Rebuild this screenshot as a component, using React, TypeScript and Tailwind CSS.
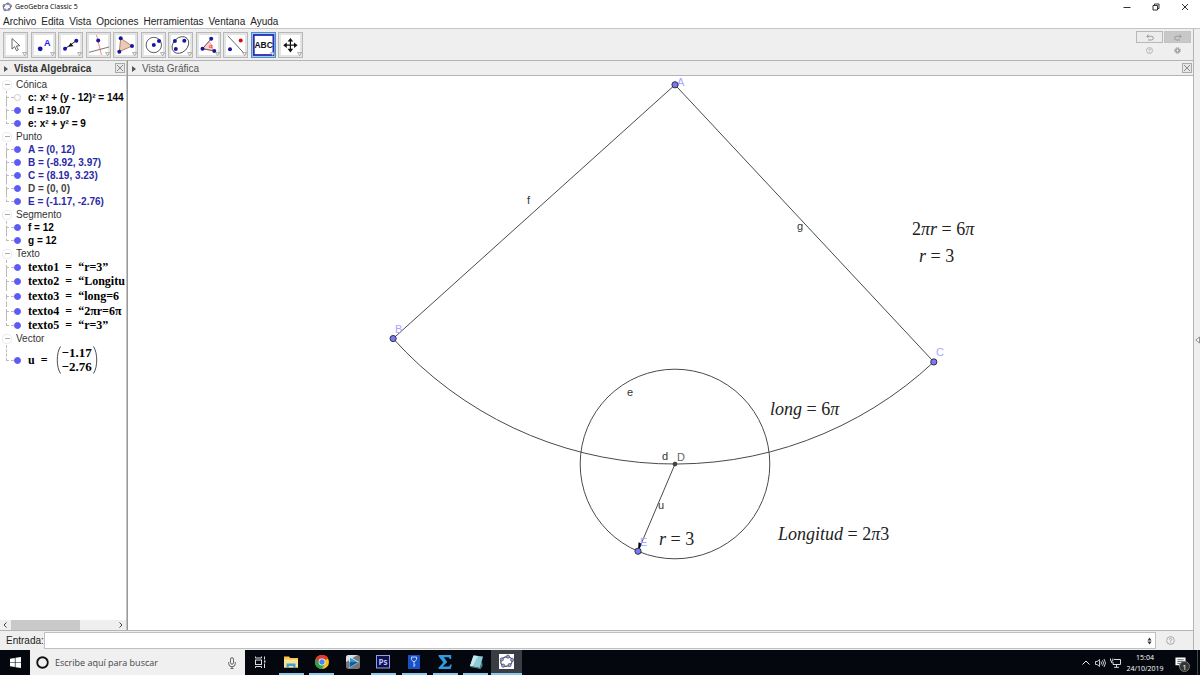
import { ReactNode } from "react";
import { clsx } from "clsx";

const MENUS = ["Archivo", "Edita", "Vista", "Opciones", "Herramientas", "Ventana", "Ayuda"];

const BLUE = "#1616a0";

const Dot = ({ x, y, fill = BLUE, r = 2 }: { x: number; y: number; fill?: string; r?: number }) => (
  <circle cx={x} cy={y} r={r} fill={fill} />
);

type Tool = { name: string; icon: ReactNode; selected?: boolean };
const TOOLS: Tool[] = [
  {
    name: "Elige y mueve",
    icon: (
      <path
        d="M9 6.5v10.6l2.6-2.4 1.9 4 1.8-.9-1.9-3.8 3.4-.3z"
        fill="#fff"
        stroke="#555"
        strokeWidth=".9"
      />
    ),
  },
  {
    name: "Punto",
    icon: (
      <>
        <Dot x={9.2} y={16.8} r={2.4} />
        <text x="13" y="13.5" fontSize="9" fontWeight="bold" fill="#1a1aff">
          A
        </text>
      </>
    ),
  },
  {
    name: "Recta",
    icon: (
      <>
        <path d="M7 16.7 18.3 8.7" stroke="#222" />
        <path d="m10.5 14.8 2-4 3 3.4z" fill="#111" />
        <Dot x={7} y={16.7} />
        <Dot x={18.3} y={8.7} />
      </>
    ),
  },
  {
    name: "Perpendicular",
    icon: (
      <>
        <path d="m10.5 3 5 20" stroke="#f88" />
        <path d="m3 20.3 20-5.3" stroke="#555" strokeWidth=".8" />
        <Dot x={12.2} y={8.5} />
      </>
    ),
  },
  {
    name: "Polígono",
    icon: (
      <>
        <path d="M7.7 6.3 19 14 6.3 19.7z" fill="#ecc9b6" stroke="#a5684c" strokeWidth=".8" />
        <Dot x={7.7} y={6.3} />
        <Dot x={19} y={14} />
        <Dot x={6.3} y={19.7} />
      </>
    ),
  },
  {
    name: "Circunferencia",
    icon: (
      <>
        <circle cx="12.8" cy="13" r="7.7" fill="none" stroke="#333" strokeWidth=".8" />
        <Dot x={12.8} y={13} />
        <Dot x={18} y={9} />
      </>
    ),
  },
  {
    name: "Elipse",
    icon: (
      <>
        <ellipse
          cx="12.4"
          cy="13"
          rx="9.4"
          ry="7.2"
          transform="rotate(-45 12.4 13)"
          fill="none"
          stroke="#333"
          strokeWidth=".8"
        />
        <Dot x={6.9} y={9} />
        <Dot x={16.3} y={8.8} />
        <Dot x={7.8} y={17} />
      </>
    ),
  },
  {
    name: "Ángulo",
    icon: (
      <>
        <path d="M6.5 16.7 13 9.5a10 10 0 0 1 3.6 9z" fill="#fbd0d0" stroke="#f66" strokeWidth=".6" />
        <path d="m15.2 6.7-8.7 10 12 2.3" fill="none" stroke="#444" strokeWidth=".8" />
        <text x="13" y="16" fontSize="6" fill="#e00">
          α
        </text>
        <Dot x={15.2} y={6.7} />
        <Dot x={6.5} y={16.7} />
        <Dot x={18.3} y={19} />
      </>
    ),
  },
  {
    name: "Simetría axial",
    icon: (
      <>
        <path d="M4.7 3.7 22 22.3" stroke="#444" strokeWidth=".8" />
        <Dot x={7} y={17.3} />
        <Dot x={17.7} y={8.5} fill="#d01010" />
      </>
    ),
  },
  {
    name: "Texto",
    selected: true,
    icon: (
      <text x="12.7" y="16.4" fontSize="8.500" fontWeight="bold" textAnchor="middle" fill="#111">
        ABC
      </text>
    ),
  },
  {
    name: "Desplaza vista gráfica",
    icon: (
      <g fill="#111">
        <path d="M11.8 9h1.2v8.4h-1.2zM8 12.6h8.6v1.2H8z" />
        <path d="m12.4 6 2.8 3.6H9.6zM12.4 20.4l2.8-3.6H9.6zM5.2 13.2l3.6-2.8V16zM19.6 13.2 16 10.4V16z" />
      </g>
    ),
  },
];

const ToolButton = ({ name, icon, selected }: Tool) => (
  <button type="button" aria-label={name} aria-pressed={!!selected}>
    <svg viewBox="0 0 25 26" className="w-[25px] h-[26px]">
      <rect
        x=".5"
        y=".5"
        width="24"
        height="25"
        fill={selected ? "#a9cdee" : "#e4e4e4"}
        stroke={selected ? "#4a90cf" : "#b8b8b8"}
      />
      <rect
        x={selected ? 2.8 : 3}
        y="3"
        width={selected ? 19.6 : 19}
        height="20"
        fill="#fff"
        stroke={selected ? "#2b2bb0" : "#fff"}
        strokeWidth={selected ? 1.8 : 0}
      />
      {icon}
      <path d="M19.6 20.6h4l-2 3z" fill="#fff" stroke="#888" strokeWidth=".7" />
    </svg>
  </button>
);

type Item = { text: ReactNode; hidden?: boolean; color?: string; latex?: boolean; height?: string };
type Group = { name: string; items: Item[] };

const Latex = ({ name, value }: { name: string; value: string }) => (
  <>
    {name}&nbsp; =&nbsp; {value}
  </>
);

const GROUPS: Group[] = [
  {
    name: "Cónica",
    items: [
      { text: "c: x² + (y - 12)² = 144", hidden: true },
      { text: "d = 19.07" },
      { text: "e: x² + y² = 9" },
    ],
  },
  {
    name: "Punto",
    items: [
      { text: "A = (0, 12)", color: "text-[#2a2aa5]" },
      { text: "B = (-8.92, 3.97)", color: "text-[#2a2aa5]" },
      { text: "C = (8.19, 3.23)", color: "text-[#2a2aa5]" },
      { text: "D = (0, 0)", color: "text-[#444]" },
      { text: "E = (-1.17, -2.76)", color: "text-[#2a2aa5]" },
    ],
  },
  { name: "Segmento", items: [{ text: "f = 12" }, { text: "g = 12" }] },
  {
    name: "Texto",
    items: [
      { text: <Latex name="texto1" value="“r=3”" />, latex: true, height: "h-[14px]" },
      { text: <Latex name="texto2" value="“Longitu" />, latex: true, height: "h-[14px]" },
      { text: <Latex name="texto3" value="“long=6" />, latex: true, height: "h-4" },
      { text: <Latex name="texto4" value="“2πr=6π" />, latex: true, height: "h-[14px]" },
      { text: <Latex name="texto5" value="“r=3”" />, latex: true, height: "h-[14px]" },
    ],
  },
  {
    name: "Vector",
    items: [
      {
        latex: true,
        height: "h-[30px]",
        text: (
          <span className="flex items-center gap-2">
            <span>u&nbsp; =</span>
            <span className="flex items-stretch gap-px">
              <svg viewBox="0 0 5 28" className="w-[5px] h-7" fill="none" stroke="#222" strokeWidth=".8">
                <path d="M4.500.5C.2 7 .2 21 4.500 27.500" />
              </svg>
              <span className="flex flex-col justify-center text-right text-[13px] leading-[14px]">
                <span>−1.17</span>
                <span>−2.76</span>
              </span>
              <svg viewBox="0 0 5 28" className="w-[5px] h-7" fill="none" stroke="#222" strokeWidth=".8">
                <path d="M.5.5c4.300 6.500 4.300 20.500 0 27" />
              </svg>
            </span>
          </span>
        ),
      },
    ],
  },
];

const TreeGroup = ({ name, items }: Group) => (
  <li>
    <div className="flex items-center h-[13px] gap-1 pl-[2px] text-[#333]">
      <button
        type="button"
        aria-label={`Contraer ${name}`}
        className="w-[10px] h-[10px] flex items-center justify-center rounded-sm border border-[#ececec]"
      >
        <span className="w-[5px] h-px bg-[#aaa]" />
      </button>
      {name}
    </div>
    <ul>
      {items.map((item, i) => (
        <li key={i} className={clsx("flex items-center pl-[6px]", item.height ?? "h-[13px]")}>
          <span className="flex flex-col self-stretch w-2 shrink-0">
            <span className="flex-1 border-l border-b border-dashed border-[#bbb]" />
            <span
              className={clsx(
                "flex-1 border-l border-dashed",
                i === items.length - 1 ? "border-transparent" : "border-[#bbb]",
              )}
            />
          </span>
          <span
            className={clsx(
              "w-[7px] h-[7px] shrink-0 rounded-full border mr-[7px]",
              item.hidden ? "border-[#ccc] bg-white" : "border-[#5b5bf5] bg-[#5b5bf5]",
            )}
          />
          <span
            className={clsx(
              "font-bold whitespace-nowrap",
              item.color ?? "text-black",
              item.latex && "font-['Liberation_Serif',serif] text-xs leading-3",
            )}
          >
            {item.text}
          </span>
        </li>
      ))}
    </ul>
  </li>
);

const CloseButton = ({ label }: { label: string }) => (
  <button type="button" aria-label={label}>
    <svg viewBox="0 0 10 10" className="w-[10px] h-[10px]" stroke="#888">
      <rect x=".5" y=".5" width="9" height="9" fill="#e8e8e8" stroke="#aaa" />
      <path d="m2 2 6 6m0-6-6 6" />
    </svg>
  </button>
);

const PanelHeader = ({ title, active }: { title: string; active?: boolean }) => (
  <header className="flex items-center justify-between h-4 border-y border-[#b4b4b4] bg-[#efefef] pl-1 pr-px">
    <h2 className={clsx("flex items-center gap-[6px] pt-px", active ? "font-bold text-[#333]" : "text-[#555]")}>
      <svg viewBox="0 0 4 6" className="w-1 h-[6px]" fill="#555">
        <path d="m0 0 4 3-4 3z" />
      </svg>
      {title}
    </h2>
    <CloseButton label={`Cerrar ${title}`} />
  </header>
);

// Graphics view: world coordinates -> canvas pixels
const SCALE = 31.6;
const px = (x: number) => 547 + x * SCALE;
const py = (y: number) => 388 - y * SCALE;

const A = { x: 0, y: 12 };
const B = { x: -8.92, y: 3.97 };
const C = { x: 8.19, y: 3.23 };
const D = { x: 0, y: 0 };
const E = { x: -1.17, y: -2.76 };

const LABELS = [
  { text: "A", x: 549, y: 10, color: "#a6a6ff" },
  { text: "B", x: 267, y: 257, color: "#a6a6ff" },
  { text: "C", x: 808, y: 280, color: "#a6a6ff" },
  { text: "D", x: 549, y: 385, color: "#666" },
  { text: "E", x: 512, y: 470, color: "#a6a6ff" },
  { text: "f", x: 399, y: 128, color: "#333" },
  { text: "g", x: 669, y: 154, color: "#333" },
  { text: "e", x: 499, y: 320, color: "#333" },
  { text: "d", x: 534, y: 384, color: "#333" },
  { text: "u", x: 530, y: 433, color: "#333" },
];

const FORMULAS = [
  { x: 784, y: 159, left: "2πr", right: "6π" },
  { x: 791, y: 186, left: "r", right: "3" },
  { x: 642, y: 339, left: "long", right: "6π" },
  { x: 531, y: 469, left: "r", right: "3" },
  { x: 650, y: 464, left: "Longitud", right: "2π3" },
];

// digits stay upright, variables are set in italics
const mathSpans = (source: string) =>
  source.split(/(\d+)/).map((part, i) => (
    <tspan key={i} fontStyle={/\d/.test(part) ? "normal" : "italic"}>
      {part}
    </tspan>
  ));

const GraphicsView = () => (
  <svg className="w-full flex-1 bg-white" role="img" aria-label="Vista Gráfica">
    <g fill="none" stroke="#4a4a4a">
      <path d={`M${px(B.x)} ${py(B.y)}L${px(A.x)} ${py(A.y)}L${px(C.x)} ${py(C.y)}`} />
      <path
        d={`M${px(B.x)} ${py(B.y)}A${12 * SCALE} ${12 * SCALE} 0 0 0 ${px(C.x)} ${py(C.y)}`}
      />
      <circle cx={px(D.x)} cy={py(D.y)} r={3 * SCALE} />
      <path d={`M${px(D.x)} ${py(D.y)}L${px(E.x)} ${py(E.y)}`} />
    </g>
    <path d={`M${px(E.x)} ${py(E.y)}l.5-9 3.500 1.500z`} fill="#000" />
    <g fontSize="11">
      {LABELS.map((l) => (
        <text key={l.text} x={l.x} y={l.y} fill={l.color}>
          {l.text}
        </text>
      ))}
    </g>
    <circle cx={px(D.x)} cy={py(D.y)} r="2" fill="#444" stroke="#222" strokeWidth=".6" />
    {[A, B, C, E].map((p) => (
      <circle key={p.x} cx={px(p.x)} cy={py(p.y)} r="3.100" fill="#7878ff" stroke="#333" />
    ))}
    <g className="font-['Liberation_Serif',serif] text-lg" fill="#222">
      {FORMULAS.map((f) => (
        <text key={`${f.x}-${f.y}`} x={f.x} y={f.y}>
          {mathSpans(f.left)} = {mathSpans(f.right)}
        </text>
      ))}
    </g>
  </svg>
);

const GeoGebraLogo = ({ className }: { className: string }) => (
  <svg viewBox="0 0 16 16" className={className}>
    <ellipse cx="8" cy="8" rx="6.200" ry="5" transform="rotate(-20 8 8)" fill="none" stroke="#555" strokeWidth="1.300" />
    <g fill="#9a9aff" stroke="#444" strokeWidth=".7">
      <circle cx="9.500" cy="2.800" r="1.700" />
      <circle cx="3" cy="5.800" r="1.700" />
      <circle cx="4.500" cy="12.400" r="1.700" />
      <circle cx="11.300" cy="11.800" r="1.700" />
      <circle cx="14" cy="6.200" r="1.700" />
    </g>
  </svg>
);

type Task = { name: string; icon: ReactNode; open?: boolean; active?: boolean };
const TASKS: Task[] = [
  {
    name: "Vista de tareas",
    icon: (
      <g fill="none" stroke="#ddd">
        <rect x="3.500" y="6" width="6" height="4.500" />
        <path d="M3.500 2.500v1.500h6V2.500M3.500 14v-1.500h6V14M12.500 2.500v3M12.500 9.500V14" />
        <path d="M12 7.500h1.500" strokeWidth="1.800" />
      </g>
    ),
  },
  {
    name: "Explorador de archivos",
    open: true,
    icon: (
      <>
        <path d="M1 2.500h5l1.300 1.500H15v9.500H1z" fill="#f3c74f" />
        <path d="M1 5.500h14v8H1z" fill="#fbe394" />
        <path d="M3.500 14V9.500h9V14h-2.300v-2H5.800v2z" fill="#3ba0e0" />
      </>
    ),
  },
  {
    name: "Chrome",
    open: true,
    icon: (
      <>
        <circle cx="8" cy="8" r="7" fill="#fbc116" />
        <path d="M8 8 1.900 4.500A7 7 0 0 1 14.100 4.500z" fill="#e33b2e" />
        <path d="M8 8 1.900 4.500A7 7 0 0 0 8 15l3-5.200z" fill="#2ba24c" />
        <path d="M8 4.800h6.300A7 7 0 0 0 1.900 4.500L5.200 9.600z" fill="#e33b2e" />
        <circle cx="8" cy="8" r="3.400" fill="#fff" />
        <circle cx="8" cy="8" r="2.700" fill="#4285f4" />
      </>
    ),
  },
  {
    name: "Reproductor",
    icon: (
      <>
        <rect x="1" y="1" width="14" height="14" rx="2.500" fill="#777" />
        <path d="M1 8V3.500A2.500 2.500 0 0 1 3.500 1h9z" fill="#ddd" />
        <path d="M4.500 3v10.500L13.500 8z" fill="#2c9bd6" stroke="#e8f6ff" strokeWidth=".8" />
        <path d="M4.500 8v5.500L13.500 8z" fill="#105f9a" />
      </>
    ),
  },
  {
    name: "Photoshop",
    open: true,
    icon: (
      <>
        <rect x="1.500" y="1.500" width="13" height="12.500" fill="#10104c" stroke="#8fa0e8" />
        <text x="8" y="11" fontSize="8" fontWeight="bold" textAnchor="middle" fill="#b9c8ff">
          Ps
        </text>
      </>
    ),
  },
  {
    name: "Llave",
    open: true,
    icon: (
      <>
        <rect x="2" y="1" width="12" height="14" fill="#1a50c4" />
        <path d="M5.500 3h5v2.500L9 7.500H7L5.500 5.500zM8 7.500V13M8 11h1.500" fill="none" stroke="#b8d4ff" />
      </>
    ),
  },
  {
    name: "Editor de ecuaciones",
    open: true,
    icon: (
      <path
        d="M1.500 1h12.700v4h-1.500c-.3-1.300-1-1.700-2.200-1.700H6.800L10.300 8l-4.500 4.500h5c1.500 0 2-.6 2.500-2h1.500L13.700 15H1.500v-1.200L6.300 8.500 1.500 2.200z"
        fill="#2f9ae0"
      />
    ),
  },
  {
    name: "Bloc de notas",
    open: true,
    icon: (
      <>
        <path d="m5.500 1.500 9.500 1-3 11.500-10-2z" fill="#8ccad4" />
        <path d="m5.500 1.500 4.500.5L4.500 12.500 2 12z" fill="#c8e8ee" />
        <path d="m2 12 10 2 2-8 .500 6-2 3L2.500 13z" fill="#4b8590" />
      </>
    ),
  },
  {
    name: "GeoGebra",
    open: true,
    active: true,
    icon: null,
  },
];

const Taskbar = () => (
  <footer className="flex h-[25px] bg-[#05070f] text-white font-['Open_Sans',sans-serif]">
    <button type="button" aria-label="Inicio" className="w-[30px] flex items-center justify-center">
      <svg viewBox="0 0 12 12" className="w-[11px] h-[11px]" fill="#fff">
        <path d="M0 1.800 5.300 1v4.700H0zM6 .900 12 0v5.700H6zM0 6.300h5.300V11L0 10.200zM6 6.300h6V12l-6-.9z" />
      </svg>
    </button>
    <label className="w-[215px] flex items-center gap-[6px] bg-[#f0f0f0] pl-[6px] pr-2">
      <svg viewBox="0 0 14 14" className="w-[13px] h-[13px]" fill="none" stroke="#111" strokeWidth="2">
        <circle cx="7" cy="7" r="5.700" />
      </svg>
      <input
        type="text"
        aria-label="Buscar"
        placeholder="Escribe aquí para buscar"
        className="flex-1 min-w-0 bg-transparent outline-none text-[9px] placeholder:text-[#444]"
      />
      <svg viewBox="0 0 10 12" className="w-[10px] h-3" fill="none" stroke="#555" strokeWidth=".9">
        <rect x="3.500" y=".7" width="3" height="6.500" rx="1.500" />
        <path d="M1.700 5v1.500a3.300 3.300 0 0 0 6.600 0V5M5 9.800v1.700M3.500 11.500h3" />
      </svg>
    </label>
    <nav className="grid grid-cols-9 w-[277px]">
      {TASKS.map((t) => (
        <button
          key={t.name}
          type="button"
          aria-label={t.name}
          className={clsx("flex flex-col items-center", t.active && "bg-[#3b3d44]")}
        >
          <span className="flex-1 flex items-center">
            {t.icon ? (
              <svg viewBox="0 0 16 16" className="w-4 h-4">
                {t.icon}
              </svg>
            ) : (
              <span className="bg-white">
                <GeoGebraLogo className="w-[15px] h-[15px]" />
              </span>
            )}
          </span>
          <span
            className={clsx("h-[2px]", t.active ? "w-full" : "w-[25px]", t.open ? "bg-[#8cc9ec]" : "bg-transparent")}
          />
        </button>
      ))}
    </nav>
    <div className="ml-auto flex items-center pr-[2px]">
      <button type="button" aria-label="Mostrar iconos ocultos" className="w-[15px] flex justify-center">
        <svg viewBox="0 0 8 5" className="w-2 h-[5px]" fill="none" stroke="#eee">
          <path d="m.5 4.500 3.500-3.500 3.500 3.500" />
        </svg>
      </button>
      <button type="button" aria-label="Volumen" className="w-[15px] flex justify-center">
        <svg viewBox="0 0 11 10" className="w-[11px] h-[10px]" fill="none" stroke="#ddd" strokeWidth=".9">
          <path d="M.5 3.500h1.700L4.500 1.500v7l-2.300-2H.5zM6 3.500q1 1.500 0 3M7.500 2.300q2 2.700 0 5.400M9 1q3 4 0 8" />
        </svg>
      </button>
      <button type="button" aria-label="Red" className="w-[15px] flex justify-center">
        <svg viewBox="0 0 11 10" className="w-[11px] h-[10px]" fill="none" stroke="#ddd">
          <path d="M4 1.500h6.500v5H3V4M6.500 6.500v2.500M4 9.300h5" />
          <path d="M.5.500v1.500a1.200 1.200 0 0 0 2.400 0V.5M1.700 3v2" />
        </svg>
      </button>
      <time className="w-11 text-center text-[7px] leading-[11px]">
        15:04
        <br />
        24/10/2019
      </time>
      <button type="button" aria-label="Notificaciones" className="relative w-[30px] h-[25px] pl-2">
        <svg viewBox="0 0 12 12" className="w-[11px] h-[11px]">
          <path d="M.5.500h11v8.500H7l-2.500 2.500V9h-4z" fill="#fff" />
          <path d="M2.500 3h7M2.500 5h7M2.500 7h5" stroke="#333" strokeWidth=".8" />
        </svg>
        <span className="absolute left-[12px] top-[11px] w-[11px] h-[11px] rounded-full border border-[#777] bg-[#333] text-[8px] leading-[9px]">
          1
        </span>
      </button>
      <span className="w-px self-stretch bg-[#444]" />
    </div>
  </footer>
);

const HelpIcon = ({ className }: { className: string }) => (
  <svg viewBox="0 0 10 10" className={className} fill="none" stroke="#999" strokeWidth=".9">
    <circle cx="5" cy="5" r="4.300" />
    <path d="M3.700 4A1.300 1.300 0 1 1 5 5.300V6M5 7v.9" />
  </svg>
);

export default function App() {
  return (
    <div className="flex flex-col min-h-screen bg-white font-['Liberation_Sans',sans-serif] text-[10px] leading-3 text-[#222]">
      <div className="flex items-center justify-between h-[14px] pl-[2px] pr-[11px]">
        <h1 className="flex items-center gap-[3px] font-['Open_Sans',sans-serif] text-[7px] text-black">
          <GeoGebraLogo className="w-[10px] h-[10px]" />
          GeoGebra Classic 5
        </h1>
        <div className="flex items-center gap-[21px]">
          <button type="button" aria-label="Minimizar">
            <svg viewBox="0 0 8 8" className="w-2 h-2" stroke="#333">
              <path d="M.5 4.500h7" />
            </svg>
          </button>
          <button type="button" aria-label="Restaurar">
            <svg viewBox="0 0 8 8" className="w-2 h-2" stroke="#333" fill="none">
              <path d="M1 2.500h4.500V7H1zM2.500 2.500V1H7v4.500H5.500" />
            </svg>
          </button>
          <button type="button" aria-label="Cerrar">
            <svg viewBox="0 0 8 8" className="w-2 h-2" stroke="#333">
              <path d="m1 1 6 6m0-6L1 7" />
            </svg>
          </button>
        </div>
      </div>

      <nav className="flex items-center h-[14px] gap-[5px] pl-[3px] pt-px">
        {MENUS.map((m) => (
          <button key={m} type="button">
            {m}
          </button>
        ))}
      </nav>

      <div className="flex-1 flex border-t border-[#c4c4c4] bg-[#efefef]">
        <main className="flex-1 min-w-0 flex flex-col border-r border-[#b4b4b4]">
          <div className="flex justify-between h-[31px] pl-[3px] pr-[2px]">
            <div className="flex justify-between items-center w-[300px]">
              {TOOLS.map((t) => (
                <ToolButton key={t.name} {...t} />
              ))}
            </div>
            <div className="grid grid-cols-2 gap-x-px content-start justify-items-center pt-[2px]">
              <button
                type="button"
                aria-label="Deshace"
                className="w-[27px] h-3 flex items-center justify-center border border-[#b8b8b8] bg-[#ececec]"
              >
                <svg viewBox="0 0 8 7" className="w-2 h-[7px]" fill="none" stroke="#999">
                  <path d="M2.500.5.800 2.300 2.500 4M1 2.300h4.500a1.700 1.700 0 0 1 0 3.700H2" />
                </svg>
              </button>
              <button
                type="button"
                aria-label="Rehace"
                className="w-[27px] h-3 flex items-center justify-center border border-[#c4c4c4] bg-[#c8c8c8]"
              >
                <svg viewBox="0 0 8 7" className="w-2 h-[7px]" fill="none" stroke="#999">
                  <path d="m5.500.5 1.700 1.800L5.500 4M7 2.300H2.500a1.700 1.700 0 0 0 0 3.700H6" />
                </svg>
              </button>
              <button type="button" aria-label="Ayuda de herramienta" className="pt-1">
                <HelpIcon className="w-[7px] h-[7px]" />
              </button>
              <button type="button" aria-label="Preferencias" className="pt-1">
                <svg viewBox="0 0 8 8" className="w-[7px] h-[7px]" fill="none" stroke="#888">
                  <circle cx="4" cy="4" r="2" strokeWidth="1.400" />
                  <circle cx="4" cy="4" r="3.300" strokeDasharray="1.300 1.300" />
                </svg>
              </button>
            </div>
          </div>

          <div className="flex-1 flex">
            <aside className="w-[126px] shrink-0 flex flex-col bg-white">
              <PanelHeader title="Vista Algebraica" active />
              <ul className="flex-1 overflow-hidden pt-[2px]">
                {GROUPS.map((g) => (
                  <TreeGroup key={g.name} {...g} />
                ))}
              </ul>
              <div className="flex items-center justify-between h-[10px] bg-[#efefef] px-[3px]">
                <svg viewBox="0 0 4 6" className="w-1 h-[6px]" fill="none" stroke="#444">
                  <path d="M3.500.5 1 3l2.500 2.500" />
                </svg>
                <div className="flex-1 self-stretch px-1">
                  <div className="w-2/3 h-full bg-[#c9c9c9]" />
                </div>
                <svg viewBox="0 0 4 6" className="w-1 h-[6px]" fill="none" stroke="#444">
                  <path d="M.5.500 3 3 .5 5.500" />
                </svg>
              </div>
            </aside>
            <div className="w-[2px] border-x border-l-[#c4c4c4] border-r-[#999]" />
            <section className="flex-1 min-w-0 flex flex-col">
              <PanelHeader title="Vista Gráfica" />
              <GraphicsView />
            </section>
          </div>

          <div className="flex items-center h-5 border-t border-[#b4b4b4] pl-[6px] pr-[18px]">
            <label htmlFor="entrada">Entrada:</label>
            <div className="flex-1 flex items-center h-[17px] border border-[#c0c0c0] bg-white pr-[3px] mr-[10px]">
              <input id="entrada" type="text" className="flex-1 min-w-0 px-1 outline-none" />
              <button type="button" aria-label="Historial de entradas">
                <svg viewBox="0 0 5 8" className="w-[5px] h-2" fill="#333">
                  <path d="M2.500.5 4.500 3.500h-4zM2.500 7.500l2-3h-4z" />
                </svg>
              </button>
            </div>
            <button type="button" aria-label="Ayuda de entrada">
              <HelpIcon className="w-[9px] h-[9px]" />
            </button>
          </div>
        </main>
        <button type="button" aria-label="Mostrar panel" className="w-[6px] flex items-center justify-end">
          <svg viewBox="0 0 5 8" className="w-[5px] h-2" fill="#fff" stroke="#777" strokeWidth=".8">
            <path d="M4.500 1v6L.8 4z" />
          </svg>
        </button>
      </div>
      <Taskbar />
    </div>
  );
}
